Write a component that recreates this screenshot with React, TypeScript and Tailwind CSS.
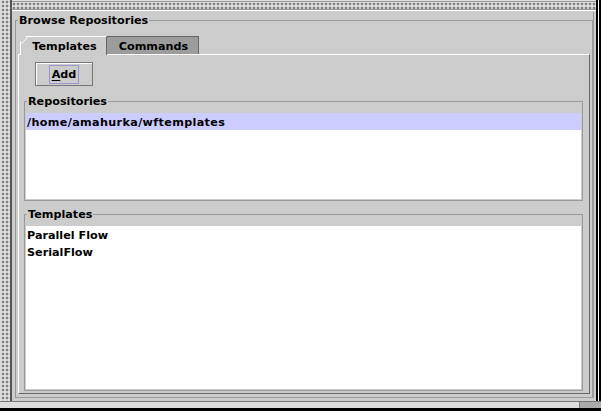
import type { ReactNode } from "react";

const dots =
  "bg-[radial-gradient(circle,#808080_0.7px,transparent_1px),radial-gradient(circle,#f0f0f0_0.6px,transparent_0.9px)] bg-[length:4px_4px] bg-[position:0_0,2px_2px]";

function GroupBox({
  title,
  children,
  className = "",
}: {
  title: string;
  children: ReactNode;
  className?: string;
}) {
  return (
    <fieldset
      className={
        "flex min-w-0 flex-col border border-[#999999] px-[1px] pt-[4px] pb-[1px] " + className
      }
    >
      <legend className="ml-[1px] px-[1px] leading-[16px]">
        <span className="relative top-[1px]">{title}</span>
      </legend>
      {children}
    </fieldset>
  );
}

function TabCorner({ stroke }: { stroke: string }) {
  return (
    <svg className="absolute left-0 top-0" width="7" height="7" viewBox="0 0 7 7">
      <line x1="0.5" y1="6.5" x2="6.5" y2="0.5" stroke={stroke} strokeWidth="1" />
    </svg>
  );
}

function Row({ children, selected = false }: { children: ReactNode; selected?: boolean }) {
  return (
    <div
      className={
        "flex h-[17px] items-center pt-[3px] pl-[1px] " +
        (selected ? "bg-[#ccccff] tracking-[0.35px]" : "")
      }
    >
      {children}
    </div>
  );
}

export default function App() {
  return (
    <div className="flex h-[411px] w-[601px] flex-col overflow-hidden bg-[#cccccc] font-['DejaVu_Sans',sans-serif] text-[11.2px] font-bold text-black">
      <div className="flex min-h-0 flex-1">
        {/* left splitter grip */}
        <div className={"w-[10px] border-l border-[#dddddd] " + dots} />
        <div className="w-[2px] bg-[#555555]" />

        <div className="flex min-w-0 flex-1 flex-col">
          {/* top splitter grip */}
          <div className="h-px bg-[#e0e0e0]" />
          <div className="h-px bg-[#999999]" />
          <div className={"h-[7px] " + dots} />
          <div className="h-px bg-[#999999]" />
          <div className="h-px bg-white" />

          <div className="flex min-h-0 flex-1 pt-[1px] pb-[3px] pl-[3px]">
            <fieldset className="flex w-[578px] min-w-0 flex-col border border-[#999999] px-[2px] pt-[8px] pb-[3px]">
              <legend className="px-[1px] leading-[16px]">
                <span className="relative top-[1px]">Browse Repositories</span>
              </legend>

              {/* tabs */}
              <div className="flex h-[18px] items-end pl-[2px]">
                <div className="relative z-10 -mb-px flex h-[19px] w-[87px] items-start justify-center border-t border-l border-r border-t-white border-l-white border-r-[#666666] bg-[#cccccc] pt-[2px] pl-[2px] [clip-path:polygon(6px_0,100%_0,100%_100%,0_100%,0_6px)]">
                  <TabCorner stroke="#ffffff" />
                  Templates
                </div>
                <div className="relative -ml-[6px] flex h-[18px] w-[98px] items-start justify-center border-t border-r border-[#666666] bg-[#9c9c9c] pt-[2px] pl-[8px] [clip-path:polygon(6px_0,100%_0,100%_100%,0_100%,0_6px)]">
                  <TabCorner stroke="#666666" />
                  Commands
                </div>
              </div>

              {/* tab content */}
              <div className="flex min-h-0 flex-1 flex-col border border-t-white border-l-white border-r-[#666666] border-b-[#666666] pt-[7px] pr-[6px] pb-[2px] pl-[5px]">
                <button className="ml-[11px] flex h-[24px] w-[58px] items-center justify-center border border-[#777777] bg-[#cccccc] shadow-[inset_1px_1px_0_#ffffff]">
                  <span className="border border-[#9999cc] px-[2px] pt-[1px] leading-[16px]">
                    <span className="underline underline-offset-2">A</span>dd
                  </span>
                </button>

                <GroupBox title="Repositories" className="mt-[7px]">
                  <div className="h-[86px] bg-white">
                    <Row selected>/home/amahurka/wftemplates</Row>
                  </div>
                </GroupBox>

                <GroupBox title="Templates" className="mt-[5px] min-h-0 flex-1">
                  <div className="min-h-0 flex-1 bg-white">
                    {["Parallel Flow", "SerialFlow"].map((t) => (
                      <Row key={t}>{t}</Row>
                    ))}
                  </div>
                </GroupBox>
              </div>
            </fieldset>
            <div className="w-px bg-[#999999]" />
            <div className="w-[2px]" />
          </div>
        </div>

        {/* right edge */}
        <div className="w-[2px] bg-black" />
        <div className="w-px bg-white" />
        <div className="w-[2px] bg-black" />
      </div>

      {/* bottom edge */}
      <div className="h-px bg-[#777777]" />
      <div className="flex h-[6px]">
        <div className="w-[579px] bg-[#dddddd]" />
        <div className="w-px bg-[#777777]" />
        <div className="flex-1 bg-[#aaaaaa]" />
      </div>
      <div className="h-[3px] bg-black" />
    </div>
  );
}
